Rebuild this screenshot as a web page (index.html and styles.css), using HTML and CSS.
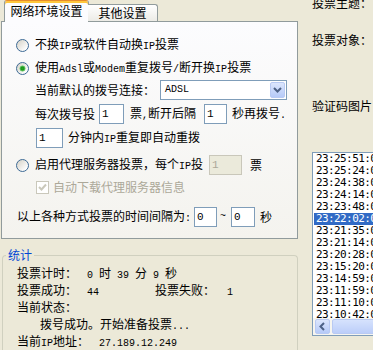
FILE: index.html
```html
<!DOCTYPE html>
<html>
<head>
    <meta charset="UTF-8">
    <title>投票设置</title>
    <link rel="stylesheet" href="styles.css">
</head>
<body>
<div class="window">
    <div class="left">
        <div class="tabs">
            <div class="tab active">网络环境设置</div>
            <div class="tab other">其他设置</div>
        </div>
        <div class="panel">
            <div class="row r1">
                <span class="radio"></span>
                <span>不换<span class="en">IP</span>或软件自动换<span class="en">IP</span>投票</span>
            </div>
            <div class="row r2">
                <span class="radio on"></span>
                <span>使用<span class="en">Adsl</span>或<span class="en">Modem</span>重复拨号<span class="en">/</span>断开换<span class="en">IP</span>投票</span>
            </div>
            <div class="row r3">
                <span>当前默认的拨号连接：</span>
                <div class="select">
                    <span class="en">ADSL</span>
                    <span class="drop">
                        <svg width="13" height="14" viewBox="0 0 13 14"><polyline points="3,5 6.5,8.5 10,5" fill="none" stroke="#4D6185" stroke-width="2"/></svg>
                    </span>
                </div>
            </div>
            <div class="row r4">
                <span>每次拨号投</span>
                <input class="box w25 ml4" type="text" value="1">
                <span class="ml6">票<span class="en">,</span>断开后隔</span>
                <input class="box w23 ml8" type="text" value="1">
                <span class="ml5">秒再拨号<span class="en">.</span></span>
            </div>
            <div class="row r5">
                <input class="box w27" type="text" value="1">
                <span class="ml5">分钟内<span class="en">IP</span>重复即自动重拨</span>
            </div>
            <div class="row r6">
                <span class="radio"></span>
                <span>启用代理服务器投票，每个<span class="en">IP</span>投</span>
                <input class="box w33 ml6" type="text" value="1" disabled>
                <span class="ml8">票</span>
            </div>
            <div class="row r7">
                <span class="check">
                    <svg width="11" height="11" viewBox="0 0 11 11"><polyline points="2,5 4.5,7.5 9,2.5" fill="none" stroke="#CAC8BB" stroke-width="2"/></svg>
                </span>
                <span class="ml4 gray">自动下载代理服务器信息</span>
            </div>
            <div class="row r8">
                <span>以上各种方式投票的时间间隔为<span class="en">:</span></span>
                <input class="box w23 ml3" type="text" value="0">
                <span class="en ml3">~</span>
                <input class="box w24 ml5" type="text" value="0">
                <span class="ml5">秒</span>
            </div>
        </div>
        <fieldset class="stats">
            <legend>统计</legend>
            <div class="lines">
                <div class="line"><span class="lbl">投票计时：</span><span class="en">0 </span>时<span class="en"> 39 </span>分<span class="en"> 9 </span>秒</div>
                <div class="line"><span class="lbl">投票成功：</span><span class="en">44</span><span class="fail">投票失败：</span><span class="en">1</span></div>
                <div class="line">当前状态：</div>
                <div class="line status">拨号成功。开始准备投票<span class="en">...</span></div>
                <div class="line"><span class="lbl">当前<span class="en">IP</span>地址：</span><span class="en">27.189.12.249</span></div>
            </div>
        </fieldset>
    </div>
    <div class="right">
        <div class="topic">投票主题：</div>
        <div class="target">投票对象：</div>
        <div class="captcha">验证码图片</div>
        <div class="list">
            <div class="items">
                <div class="item">23:25:51:00 投票成功</div>
                <div class="item">23:25:24:00 投票成功</div>
                <div class="item">23:24:38:00 投票成功</div>
                <div class="item">23:24:14:00 投票成功</div>
                <div class="item">23:23:48:00 投票成功</div>
                <div class="item sel">23:22:02:00 投票成功</div>
                <div class="item">23:21:35:00 投票成功</div>
                <div class="item">23:21:14:00 投票成功</div>
                <div class="item">23:20:28:00 投票成功</div>
                <div class="item">23:15:20:00 投票成功</div>
                <div class="item">23:14:59:00 投票成功</div>
                <div class="item">23:11:59:00 投票成功</div>
                <div class="item">23:11:10:00 投票成功</div>
                <div class="item">23:10:42:00 投票成功</div>
            </div>
            <div class="hscroll">
                <span class="sbtn">
                    <svg width="13" height="13" viewBox="0 0 13 13"><polyline points="8,3 4.5,6.5 8,10" fill="none" stroke="#4D6185" stroke-width="2"/></svg>
                </span>
                <span class="thumb"></span>
            </div>
        </div>
    </div>
</div>
</body>
</html>
```

FILE: styles.css
```css
body {
    margin: 0;
    width: 373px;
    height: 350px;
    overflow: hidden;
    background-color: #ECE9D8;
    font-family: "Noto Sans CJK SC", sans-serif;
    font-size: 12px;
    color: #000000;
}
.window {
    display: flex;
}
.left {
    width: 298px;
    flex: none;
}
.right {
    width: 61px;
    height: 350px;
    flex: none;
    margin-left: 14px;
    overflow: hidden;
}
/* ascii runs, 6px per char like the old bitmap font */
.en {
    font-family: "Liberation Mono", monospace;
    font-size: 10px;
}

/* tabs */
.tabs {
    display: flex;
    align-items: flex-end;
    height: 21px;
    padding-left: 4px;
    position: relative;
    z-index: 1;
}
.tab {
    box-sizing: border-box;
    height: 17px;
    line-height: 16px;
    text-align: center;
    border: 1px solid #919B9C;
    border-bottom: none;
    background: linear-gradient(#FFFFFF, #ECEBE6);
}
.tab.active {
    width: 85px;
    height: 22px;
    line-height: 20px;
    margin-bottom: -1px;
    border-top-color: #E68B2C;
    border-radius: 3px 3px 0 0;
    background: #FCFCFE;
    box-shadow: inset 0 2px 0 #FFC73C;
}
.tab.other {
    width: 70px;
    margin-left: -1px;
    border-left: none;
    border-radius: 0 3px 0 0;
}
.panel {
    box-sizing: border-box;
    width: 297px;
    height: 218px;
    margin-left: 1px;
    border: 1px solid #919B9C;
    background: linear-gradient(#FCFCFE, #F4F3EE);
}
.row {
    display: flex;
    align-items: center;
    height: 20px;
    line-height: 14px;
    white-space: nowrap;
}
.r1 { margin-top: 13px; padding-left: 14px; }
.r2 { margin-top: 3px; padding-left: 14px; }
.r3 { margin-top: 2px; padding-left: 33px; }
.r4 { margin-top: 4px; padding-left: 33px; }
.r5 { margin-top: 4px; padding-left: 34px; }
.r6 { margin-top: 7px; padding-left: 14px; }
.r7 { margin-top: 2px; padding-left: 34px; }
.r8 { margin-top: 10px; padding-left: 15px; }

.ml3 { margin-left: 3px; }
.ml4 { margin-left: 4px; }
.ml5 { margin-left: 5px; }
.ml6 { margin-left: 6px; }
.ml8 { margin-left: 8px; }
.w23 { width: 23px; }
.w24 { width: 24px; }
.w25 { width: 25px; }
.w27 { width: 27px; }
.w33 { width: 33px; }
.gray { color: #ACA899; }

.radio {
    box-sizing: border-box;
    width: 13px;
    height: 13px;
    margin-right: 6px;
    border: 1px solid #3D6A95;
    border-radius: 50%;
    background: linear-gradient(135deg, #D4D1C6, #FFFFFF 85%);
    flex: none;
}
.radio.on {
    background: radial-gradient(circle, #23A823 0, #1E961E 1.5px, #7CD27C 2.8px, transparent 3.3px),
                linear-gradient(135deg, #D4D1C6, #FFFFFF 85%);
}
.check {
    box-sizing: border-box;
    width: 13px;
    height: 13px;
    border: 1px solid #CAC8BB;
    background: #FFFFFF;
    display: flex;
    flex: none;
}
.box {
    box-sizing: border-box;
    height: 20px;
    padding: 0 2px;
    border: 1px solid #7F9DB9;
    background: #FFFFFF;
    font-family: "Liberation Mono", monospace;
    font-size: 11px;
    color: #000000;
    outline: none;
}
.box:disabled {
    border-color: #C9C7BA;
    background: #EBEADB;
    color: #ACA899;
}
.select {
    box-sizing: border-box;
    width: 127px;
    height: 20px;
    margin-left: 5px;
    padding: 1px 1px 1px 4px;
    border: 1px solid #7F9DB9;
    background: #FFFFFF;
    display: flex;
    align-items: center;
    justify-content: space-between;
}
.drop, .sbtn {
    box-sizing: border-box;
    width: 15px;
    height: 16px;
    border: 1px solid #B9CAF3;
    border-radius: 2px;
    background: linear-gradient(#DCE6FD, #B6CAF8);
    display: flex;
    align-items: center;
    justify-content: center;
}

/* group box */
.stats {
    box-sizing: border-box;
    width: 296px;
    height: 102px;
    margin: 9px 0 0 2px;
    padding: 0;
    border: 1px solid #D0D0BF;
    border-bottom: none;
    border-radius: 4px 4px 0 0;
}
.stats legend {
    margin-left: 3px;
    padding: 0 2px;
    line-height: 14px;
    color: #0046D5;
}
.lines {
    padding: 2px 0 0 14px;
    white-space: nowrap;
}
.line {
    height: 17px;
    line-height: 17px;
}
.lbl { margin-right: 10px; }
.fail { margin: 0 12px 0 56px; }
.status { padding-left: 23px; }

/* right column */
.topic {
    margin-top: -4px;
    line-height: 14px;
}
.target {
    margin-top: 23px;
    line-height: 14px;
}
.captcha {
    margin-top: 52px;
    line-height: 14px;
}
.list {
    box-sizing: border-box;
    width: 90px;
    height: 184px;
    margin-top: 39px;
    border: 1px solid #7F9DB9;
    background: #FFFFFF;
}
.items {
    height: 165px;
    overflow: hidden;
}
.item {
    height: 12px;
    line-height: 12px;
    margin-left: 1px;
    padding-left: 2px;
    font-family: "DejaVu Sans Mono", monospace;
    font-size: 11px;
    letter-spacing: -0.6px;
    white-space: nowrap;
}
.item.sel {
    background: #316AC5;
    color: #FFFFFF;
}
.hscroll {
    height: 17px;
    box-sizing: border-box;
    padding: 1px 0 0 2px;
    background: #F6F5F0;
    display: flex;
}
.sbtn {
    height: 15px;
}
.thumb {
    flex: 1;
    height: 15px;
    box-sizing: border-box;
    margin-left: 2px;
    border: 1px solid #B9CAF3;
    border-radius: 2px;
    background: linear-gradient(#D6E2FD, #BCCEF9);
}
```
